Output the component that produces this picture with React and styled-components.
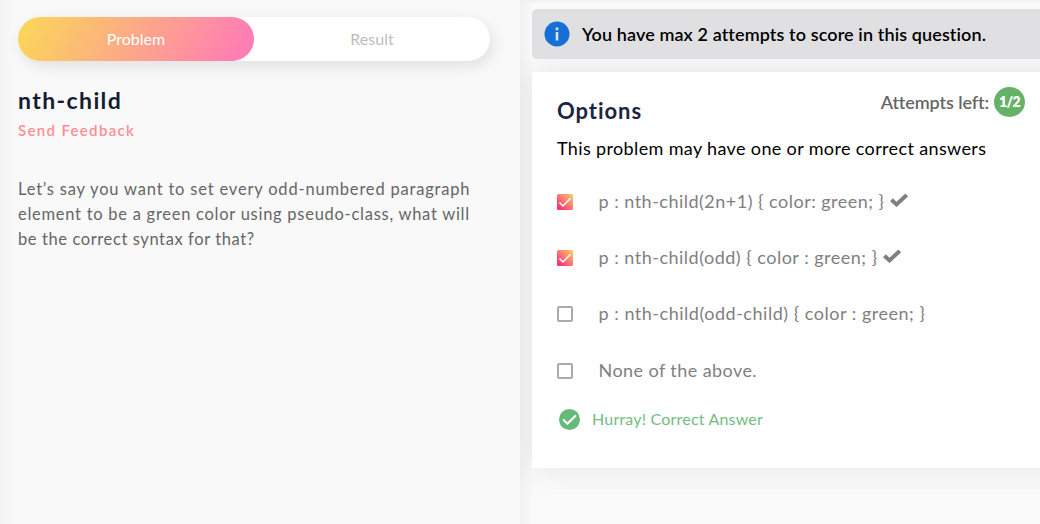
import React from "react";
import styled, { createGlobalStyle } from "styled-components";

const GlobalStyle = createGlobalStyle`
  * { box-sizing: border-box; }
  body { margin: 0; font-family: Lato, "Open Sans", sans-serif; background: #f9f9f9; overflow: hidden; }
  h1, h2, p { margin: 0; }
`;

const Page = styled.main`
  display: flex;
  width: 1040px;
  height: 524px;
  overflow: hidden;
`;

const ProblemPane = styled.section`
  flex: 0 0 520px;
  padding: 17px 30px 0 18px;
  background: linear-gradient(90deg, #f4f4f4 0, #f9f9f9 15px);
`;

const Tabs = styled.nav`
  display: flex;
  height: 44px;
  border-radius: 22px;
  background: #fff;
  box-shadow: 3px 5px 15px rgba(0, 0, 0, 0.1);
`;

const Tab = styled.div`
  flex: 1;
  border-radius: 22px;
  text-align: center;
  font-size: 16px;
  line-height: 43px;
  color: ${(p) => (p.$active ? "#fff" : "#bdbdbd")};
  background: ${(p) => (p.$active ? "linear-gradient(118deg, #fad956 0%, #ff7eb3 92%)" : "none")};
`;

const Title = styled.h1`
  margin-top: 25px;
  font-size: 23px;
  line-height: 28px;
  font-weight: 700;
  letter-spacing: 1.4px;
  color: #141c31;
`;

const Feedback = styled.div`
  margin-top: 6px;
  font-size: 15px;
  line-height: 20px;
  font-weight: 600;
  letter-spacing: 1.33px;
  color: #ff8e93;
`;

const Question = styled.p`
  margin-top: 37px;
  font-size: 16.5px;
  line-height: 25px;
  color: #666;
`;

const Line = styled.span`
  display: block;
  white-space: nowrap;
  letter-spacing: ${(p) => p.$spacing}px;
`;

const AnswerPane = styled.section`
  flex: 1;
  min-width: 0;
  padding: 9px 0 0 12px;
  overflow: hidden;
  background:
    linear-gradient(180deg, #f0f0f0 0, rgba(250, 250, 250, 0) 4px),
    linear-gradient(90deg, #f0f0f0 0, #fafafa 14px);
`;

const Notice = styled.div`
  position: relative;
  z-index: 1;
  display: flex;
  align-items: center;
  width: 540px;
  height: 50px;
  padding-left: 12px;
  border-radius: 5px;
  background: #e0e0e2;
  font-size: 18px;
  font-weight: 600;
  letter-spacing: 0.11px;
  white-space: nowrap;
  color: #000;
`;

const InfoIcon = styled.svg`
  width: 26px;
  height: 26px;
  margin-right: 12px;
`;

const Card = styled.div`
  width: 540px;
  height: 396px;
  margin-top: 13px;
  padding: 0 47px 0 25px;
  background: #fff;
  box-shadow: 0 0 30px rgba(0, 0, 0, 0.09);
`;

const CardHeader = styled.header`
  display: flex;
  justify-content: space-between;
  height: 64px;
`;

const CardTitle = styled.h2`
  padding-top: 25px;
  font-size: 22px;
  line-height: 28px;
  font-weight: 700;
  letter-spacing: 0.95px;
  color: #1c2542;
`;

const Attempts = styled.div`
  display: flex;
  align-items: center;
  gap: 5px;
  height: 30px;
  margin-top: 15px;
  font-size: 18px;
  font-weight: 600;
  line-height: 28px;
  letter-spacing: -0.1px;
  color: #666;
`;

const AttemptCount = styled.span`
  width: 31px;
  height: 30px;
  border-radius: 50%;
  background: #66b168;
  color: #fff;
  font-size: 14px;
  font-weight: 800;
  line-height: 30px;
  text-align: center;
  letter-spacing: -0.6px;
`;

const Hint = styled.p`
  margin-top: -1px;
  font-size: 18px;
  line-height: 26px;
  letter-spacing: 0.36px;
  white-space: nowrap;
  color: #000;
`;

const OptionList = styled.div`
  display: grid;
  grid-auto-rows: 56.3px;
  padding-top: 12px;
`;

const Option = styled.label`
  display: flex;
  align-items: center;
  font-size: 18px;
  line-height: 22px;
  white-space: nowrap;
  letter-spacing: ${(p) => p.$spacing}px;
  color: #808080;
`;

const OptionText = styled.span`
  padding-bottom: 1px;
`;

const Box = styled.svg`
  flex: none;
  width: 16px;
  height: 16px;
  margin: 1px 25.5px 0 0;
`;

const CorrectMark = styled.svg`
  width: 18px;
  height: 14px;
  margin: 0 0 2px 5px;
`;

const Verdict = styled.div`
  display: flex;
  align-items: center;
  gap: 12px;
  height: 22px;
  margin-top: 10.5px;
  padding-left: 2px;
  font-size: 16px;
  line-height: 20px;
  letter-spacing: 0.2px;
  color: #72bd81;
`;

const VerdictIcon = styled.svg`
  width: 21px;
  height: 21px;
`;

const VerdictText = styled.span`
  padding-bottom: 1px;
`;

const options = [
  { text: "p : nth-child(2n+1) { color: green; }", checked: true, spacing: 0.49 },
  { text: "p : nth-child(odd) { color : green; }", checked: true, spacing: 0.5 },
  { text: "p : nth-child(odd-child) { color : green; }", checked: false, spacing: 0.52 },
  { text: "None of the above.", checked: false, spacing: 0.43 },
];

function Checkbox({ checked }) {
  return (
    <Box viewBox="0 0 16 16">
      {checked ? (
        <>
          <defs>
            <linearGradient id="tick-fill" x1="0" y1="1" x2="1" y2="0">
              <stop offset="0" stopColor="#f91f7d" />
              <stop offset="1" stopColor="#fbd065" />
            </linearGradient>
          </defs>
          <rect width="16" height="16" rx="1.5" fill="url(#tick-fill)" />
          <path d="M2.5 8.5 6 12 13.5 4.2" fill="none" stroke="#fff" strokeWidth="1.5" />
        </>
      ) : (
        <rect x="1" y="1" width="14" height="14" rx="1" fill="#fff" stroke="#aaa" strokeWidth="2" />
      )}
    </Box>
  );
}

export default function App() {
  return (
    <>
      <GlobalStyle />
      <Page>
        <ProblemPane>
          <Tabs>
            <Tab $active>Problem</Tab>
            <Tab>Result</Tab>
          </Tabs>
          <Title>nth-child</Title>
          <Feedback>Send Feedback</Feedback>
          <Question>
            <Line $spacing={0.81}>Let’s say you want to set every odd-numbered paragraph</Line>
            <Line $spacing={0.73}>element to be a green color using pseudo-class, what will</Line>
            <Line $spacing={0.6}>be the correct syntax for that?</Line>
          </Question>
        </ProblemPane>
        <AnswerPane>
          <Notice>
            <InfoIcon viewBox="0 0 26 26">
              <circle cx="13" cy="13" r="12.5" fill="#1670d3" />
              <path d="M11.7 6.5h2.6v2.7h-2.6zM11.7 11h2.6v8.5h-2.6z" fill="#d5e2f2" />
            </InfoIcon>
            You have max 2 attempts to score in this question.
          </Notice>
          <Card>
            <CardHeader>
              <CardTitle>Options</CardTitle>
              <Attempts>
                Attempts left:
                <AttemptCount>1/2</AttemptCount>
              </Attempts>
            </CardHeader>
            <Hint>This problem may have one or more correct answers</Hint>
            <OptionList>
              {options.map((o) => (
                <Option key={o.text} $spacing={o.spacing}>
                  <Checkbox checked={o.checked} />
                  <OptionText>{o.text}</OptionText>
                  {o.checked && (
                    <CorrectMark viewBox="0 0 18 14">
                      <path d="M1.4 6.8 6.5 11.4 16.7 1.9" fill="none" stroke="#808080" strokeWidth="4" />
                    </CorrectMark>
                  )}
                </Option>
              ))}
            </OptionList>
            <Verdict>
              <VerdictIcon viewBox="0 0 21 21">
                <circle cx="10.5" cy="10.5" r="10.5" fill="#66ba78" />
                <path d="M4.2 10.6 8.4 14.8 17 6.2" fill="none" stroke="#fff" strokeWidth="2.1" />
              </VerdictIcon>
              <VerdictText>Hurray! Correct Answer</VerdictText>
            </Verdict>
          </Card>
        </AnswerPane>
      </Page>
    </>
  );
}
